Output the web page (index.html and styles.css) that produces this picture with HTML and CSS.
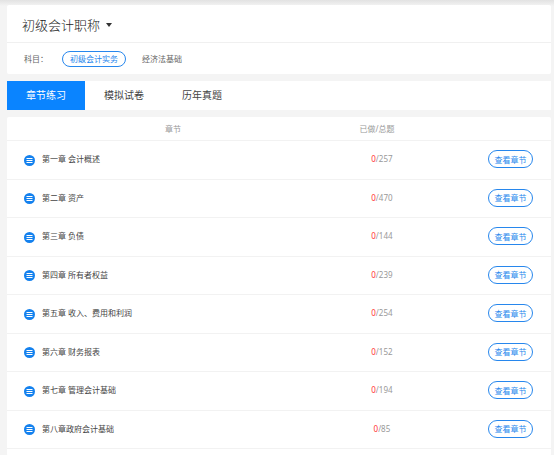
FILE: index.html
```html
<!DOCTYPE html>
<html lang="zh">
<head>
  <meta charset="UTF-8" />
  <title>初级会计职称</title>
  <link rel="stylesheet" href="styles.css">
</head>
<body>
  <!-- 图标定义 -->
  <svg class="sprite" aria-hidden="true">
    <symbol id="list" viewBox="0 0 22 22">
      <circle cx="11" cy="11" r="11" fill="#1481ee"/>
      <path d="M5 7h12M5 11h12M5 15h12" stroke="#fff" stroke-width="2"/>
    </symbol>
  </svg>

  <div class="container">
    <section class="card">
      <div class="title">
        <select class="exam" aria-label="考试">
          <option>初级会计职称</option>
        </select>
      </div>
      <div class="subjects">
        <span class="label">科目：</span>
        <a class="subject active" href="#">初级会计实务</a>
        <a class="subject" href="#">经济法基础</a>
      </div>
    </section>

    <nav class="tabs">
      <a class="tab active" href="#">章节练习</a>
      <a class="tab" href="#">模拟试卷</a>
      <a class="tab" href="#">历年真题</a>
    </nav>

    <section class="card chapters">
      <table>
        <thead>
          <tr><th class="col-name">章节</th><th class="col-count">已做/总题</th><th></th></tr>
        </thead>
        <tbody>
          <tr>
            <td><div class="chapter"><svg class="icon"><use href="#list"/></svg>第一章 会计概述</div></td>
            <td class="count"><span class="done">0</span>/257</td>
            <td class="action"><button>查看章节</button></td>
          </tr>
          <tr>
            <td><div class="chapter"><svg class="icon"><use href="#list"/></svg>第二章 资产</div></td>
            <td class="count"><span class="done">0</span>/470</td>
            <td class="action"><button>查看章节</button></td>
          </tr>
          <tr>
            <td><div class="chapter"><svg class="icon"><use href="#list"/></svg>第三章 负债</div></td>
            <td class="count"><span class="done">0</span>/144</td>
            <td class="action"><button>查看章节</button></td>
          </tr>
          <tr>
            <td><div class="chapter"><svg class="icon"><use href="#list"/></svg>第四章 所有者权益</div></td>
            <td class="count"><span class="done">0</span>/239</td>
            <td class="action"><button>查看章节</button></td>
          </tr>
          <tr>
            <td><div class="chapter"><svg class="icon"><use href="#list"/></svg>第五章 收入、费用和利润</div></td>
            <td class="count"><span class="done">0</span>/254</td>
            <td class="action"><button>查看章节</button></td>
          </tr>
          <tr>
            <td><div class="chapter"><svg class="icon"><use href="#list"/></svg>第六章 财务报表</div></td>
            <td class="count"><span class="done">0</span>/152</td>
            <td class="action"><button>查看章节</button></td>
          </tr>
          <tr>
            <td><div class="chapter"><svg class="icon"><use href="#list"/></svg>第七章 管理会计基础</div></td>
            <td class="count"><span class="done">0</span>/194</td>
            <td class="action"><button>查看章节</button></td>
          </tr>
          <tr>
            <td><div class="chapter"><svg class="icon"><use href="#list"/></svg>第八章政府会计基础</div></td>
            <td class="count"><span class="done">0</span>/85</td>
            <td class="action"><button>查看章节</button></td>
          </tr>
        </tbody>
      </table>
    </section>
  </div>
</body>
</html>
```
FILE: styles.css
```css
* {
  box-sizing: border-box;
}

body {
  margin: 0;
  font-family: "Noto Sans", "Noto Sans CJK SC", sans-serif;
  font-size: 8px;
  line-height: 12px;
  color: #444;
  background: #f4f4f4 linear-gradient(#e2e2e2, #f4f4f4) no-repeat 0 0 / 100% 6px;
}

a {
  color: inherit;
  text-decoration: none;
}

.sprite {
  display: none;
}

.container {
  display: flex;
  flex-direction: column;
  gap: 7px;
  padding: 5px 3px 0 7px;
}

.card {
  background: #fff;
  border-radius: 2px;
}

.title {
  display: flex;
  align-items: center;
  gap: 5px;
  height: 38px;
  padding: 2px 15px 0;
  border-bottom: 1px solid #f0f0f0;
}

/* 下拉箭头 */
.title::after {
  content: "";
  border: 3px solid transparent;
  border-top: 4px solid #333;
  border-bottom: 0;
}

.exam {
  appearance: none;
  padding: 0;
  border: none;
  background: none;
  font-family: inherit;
  font-size: 13px;
  font-weight: 300;
  color: #222;
}

.subjects {
  display: flex;
  align-items: center;
  height: 31px;
  padding: 0 17px;
  color: #666;
}

.label {
  width: 38px;
}

.subject {
  padding: 1px 7px;
  border: 1px solid transparent;
  border-radius: 8px;
  margin-right: 8px;
}

.subject.active {
  color: #2787ed;
  border-color: #2787ed;
}

.tabs {
  display: flex;
  background: #fff;
}

.tab {
  width: 78px;
  font-size: 10px;
  line-height: 29px;
  text-align: center;
}

.tab.active {
  color: #fff;
  background: #0a84ff;
}

.chapters {
  padding-bottom: 7px;
}

table {
  width: 100%;
  table-layout: fixed;
  border-collapse: separate;
  border-spacing: 0;
}

th,
td {
  padding: 0;
  border-bottom: 1px solid #f2f2f2;
}

th {
  height: 24px;
  font-weight: normal;
  color: #999;
}

td {
  height: 39px;
  padding-bottom: 2px;
}

tr:nth-child(even) td {
  height: 38px;
}

.col-name {
  width: 61%;
}

.col-count {
  width: 14%;
}

.chapter {
  display: flex;
  align-items: center;
  gap: 7px;
  padding-left: 17px;
}

.icon {
  width: 11px;
  height: 11px;
  margin-top: 2px;
}

.count {
  padding-left: 10px;
  text-align: center;
  color: #999;
}

.done {
  color: #f33;
}

.action {
  padding-right: 18px;
  text-align: right;
}

button {
  width: 45px;
  height: 18px;
  padding: 0;
  border: 1px solid #2787ed;
  border-radius: 9px;
  background: #fff;
  color: #2787ed;
  font-family: inherit;
  font-size: 8px;
  cursor: pointer;
}
```
